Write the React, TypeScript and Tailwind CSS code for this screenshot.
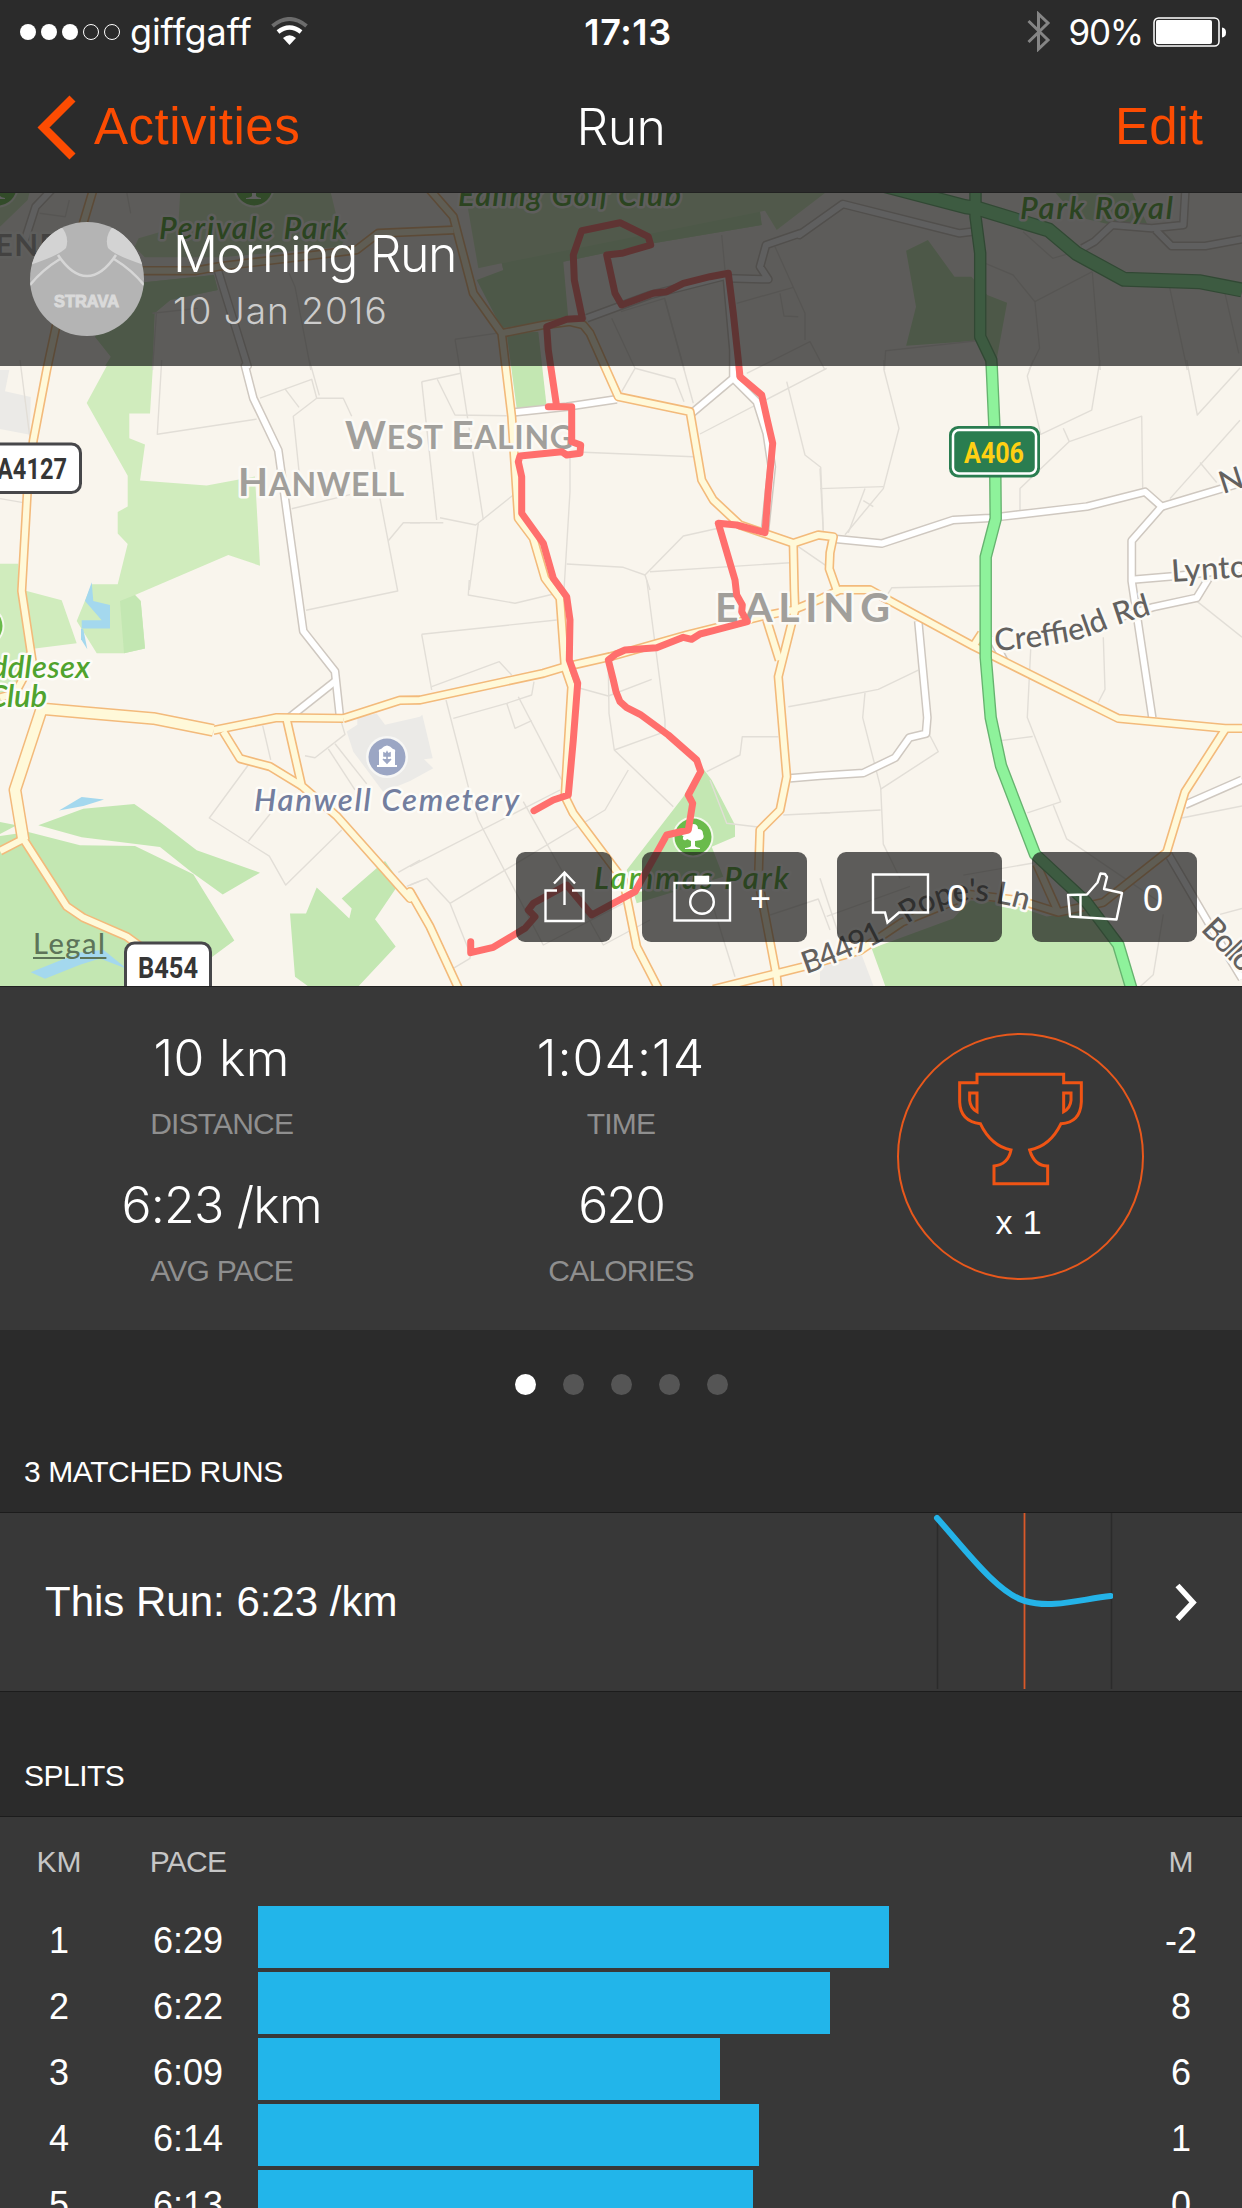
import React from "react";

/* ---------- map geometry ---------- */

type Pt = string;

// Each survey sheet has its own origin and scale; points are projected into screen space.
const sheet = (ox: number, oy: number, kx: number, ky: number) => (pts: string): Pt =>
  pts
    .trim()
    .split(/\s+/)
    .map((p) => {
      const [x, y] = p.split(",").map(Number);
      return `${(ox + x / kx).toFixed(1)},${(oy + y / ky).toFixed(1)}`;
    })
    .join(" ");

const nw = sheet(0, 0, 2.525, 3);
const ne = sheet(621, 0, 2.525, 3);
const w = sheet(0, 360, 3, 2.489);
const e = sheet(820, 360, 3, 2.489);
const c = sheet(410, 190, 3, 3);
const s = sheet(410, 580, 3, 3);
const join = (...parts: Pt[]) => parts.join(" ");

const lightParks: Pt[] = [
  nw("350,715 450,680 455,576 835,576 850,650 880,700 860,740 560,772 365,772 340,740"),
  join(nw("340,850 540,825 550,870 430,900 390,940 385,1100"), w("460,0 450,133 388,133 388,195 435,210 420,300 620,312 765,290 780,512 685,485 405,585 422,600 435,718 372,730 290,730 230,650 275,558 353,558 383,458 353,432 353,378 383,365 383,288 260,107 330,0"), nw("280,1070 240,1010")),
  w("0,507 55,507 58,575 80,575 185,598 230,705 105,718 105,770 0,850"),
  c("165,5 1250,5 1100,120 1065,62 1050,65 1055,105 700,165 460,215 280,240 275,220 205,235"),
  nw("0,576 75,576 70,600 0,680"),
];
const parks: Pt[] = [
  nw("340,850 540,825 550,870 430,900 390,940 385,1098 265,1098 280,1070 240,1010"),
  w("360,600 405,585 422,600 435,718 372,730"),
  w("115,1158 250,1117 403,1105 480,1150 590,1220 780,1276 668,1330 575,1275 480,1212 245,1188"),
  w("0,1185 85,1175 240,1208 405,1210 580,1280 703,1445 630,1490 630,1568 0,1568"),
  w("0,1150 50,1158 0,1180"),
  w("950,1313 1048,1390 1055,1365 1025,1340 1155,1247 1200,1300 1125,1392 1187,1460 1065,1568 940,1568 885,1535 870,1378 918,1378"),
  c("275,220 1050,65 1055,105 700,165 460,215 475,385 275,415 200,270 280,240"),
  c("290,430 385,425 410,650 320,655"),
  ne("720,752 775,720 842,830 885,830 925,885 975,908 945,1100 940,1060 900,1022 720,1037 745,920"),
  ne("1095,576 1290,576 1330,675 1240,675 1150,650"),
  s("875,560 905,600 975,735 975,770 905,800 940,890 680,970 650,870 820,650"),
  e("155,1465 400,1390 450,1345 560,1350 680,1385 800,1370 910,1450 950,1568 200,1568"),
];
const water: Pt[] = [
  w("275,553 280,600 330,610 330,668 245,668 245,648 305,648 255,600"),
  w("243,668 250,670 262,720 243,695"),
  w("177,1121 245,1088 312,1094 250,1110"),
  w("92,1524 240,1475 310,1468 380,1515 300,1490 240,1505 135,1540"),
];
const grounds: Pt[] = [
  w("0,25 28,25 15,78 92,92 90,186 0,172"),
  join(w("1040,925 1072,908 1072,890 1130,880 1155,908 1260,888"), s("37,404 68,535 42,538 70,565 0,603"), w("1150,1075 1060,975")),
  e("0,1510 120,1470 165,1568 0,1568"),
];

const lanes: Pt[] = [
  ...["60,0 90,195", "485,0 472,185 770,147", "780,95 935,48 950,95 1030,95 1055,140", "928,0 958,88", "855,72 897,118", "950,95 880,140 900,300", "875,370 1050,335", "1115,220 1140,345 1193,575 918,623", "1165,450 1210,405 1260,405", "788,910 812,995", "745,1008 628,1140 808,1235 857,1307 1025,1170", "745,1198 810,1130", "915,985 945,990 1035,932 1020,890", "985,968 1065,1070", "1005,955 1100,1055", "1195,1275 1260,1245", "1220,1310 1260,1297", "0,345 70,355"].map(w),
  ...["135,448 260,430", "135,448 152,550 220,990", "35,575 152,550", "35,575 80,990", "82,568 135,675 290,677", "0,998 100,998", "90,983 197,1005 310,915", "205,1000 178,1200", "520,787 850,800", "480,800 480,905 462,1200", "605,385 675,535 795,567 822,635", "675,535 635,605", "765,330 850,640", "470,1122 640,1132 705,1155 820,1038 925,1015", "705,1155 720,1200", "720,1145 1140,1118", "870,732 1250,535", "980,340 1150,292", "1095,170 1150,292 1185,370 1185,450", "1010,550 1200,455 1245,540", "1110,310 1122,378 1165,380", "1130,575 1185,795 1232,832 1240,1020", "1165,1070 1260,1135", "935,135 945,240"].map(c),
  ...["178,0 175,45 315,70 440,40", "35,163 440,120", "35,163 65,330", "65,320 268,245 305,285", "108,360 180,640 205,720 400,1095 640,970", "130,415 290,370 365,345 372,305", "290,370 315,445 365,422", "325,350 455,600", "0,860 450,630", "120,970 585,690 655,570", "340,665 580,1095 720,1020", "0,915 50,895 120,970 180,1120 180,1135 130,1165", "510,325 595,348 725,298", "595,260 597,400 613,510 790,680", "613,510 765,455 765,420 710,0", "890,575 990,525 997,470 1105,470", "900,600 950,730 1050,742", "1135,380 1260,358", "1120,705 1260,698", "1080,1005 1225,957 1260,1050", "905,965 975,1190"].map(s),
  ...["192,0 192,25 237,170 190,320 75,435", "0,320 190,315", "0,270 10,430", "85,430 135,320", "130,350 160,365", "640,0 622,40 662,185 815,125 840,0", "600,375 600,320 748,203 965,140 968,320", "730,170 748,203", "1100,0 1132,137 1260,20", "1050,345 1260,150", "1140,255 1190,305", "190,600 215,567 480,562", "632,720 622,890 722,1100 622,1127", "545,947 638,937", "850,690 855,820 835,852", "1130,600 1266,690", "0,848 175,820 295,772", "135,828 128,890 182,1065 190,1205 240,1290", "182,1068 355,975 330,935", "0,1128 182,1120", "700,1108 740,1192 1020,1350", "1085,1140 1266,1110", "1030,1380 1000,1530 960,1560", "0,1290 60,1440", "20,1385 270,1310", "430,1282 640,1252", "1200,1380 1266,1365"].map(e),
  ...["920,790 990,825 1045,905 1057,1045 1030,1110", "1045,905 1190,815", "1190,815 1210,1110", "1385,860 1430,1110", "1525,880 1560,1060", "665,1110 668,1052 900,1022", "1015,695 1090,775 1190,740", "0,935 110,895 160,1110"].map(ne),
  ...["385,940 500,925", "395,940 385,1110", "730,820 745,860 785,1110", "100,640 165,650 175,600", "320,576 330,640"].map(nw),
];

const streets: Pt[] = [
  nw("60,730 90,620 130,570"),
  join(nw("550,810 625,1098"), w("735,15 760,95 835,225 910,675 1005,775 1020,890")),
  w("1005,800 865,892"),
  c("300,668 470,650 620,628"),
  c("530,385 720,315 945,258"),
  c("845,670 970,565 970,480 950,260"),
  c("970,565 1040,635 1070,730 1085,830 1065,1020"),
  join(c("950,265 1055,268 1075,268 1050,230 1068,165 1170,130"), ne("450,705 560,612 855,700 885,695")),
  e("40,445 185,457 400,398 510,393 800,365 975,328 1025,365 1266,305"),
  e("1025,365 935,450 935,550 997,890"),
  e("935,547 1060,538 1266,520"),
  e("900,640 1000,615 1130,592 1165,545"),
  join(e("295,650 322,890 318,930 268,940 225,990 130,1028 0,1035"), s("1140,595")),
  e("1095,1107 1266,1045"),
  e("1045,1230 1200,1450 1266,1540"),
  e("515,690 555,752"),
  ne("1165,745 1195,725 1240,675 1340,685 1420,675 1425,570"),
  ne("1350,690 1390,738 1475,738 1568,718"),
];

const roads: Pt[] = [
  join(nw("235,570 165,850 118,1110"), w("100,200 82,330 65,575 97,750 45,830 0,840")),
  w("0,1222 70,1192 200,1360 250,1388 380,1435 430,1465"),
  w("640,922 830,890 1030,892"),
  join(w("1030,892 1200,847"), s("30,360 400,280 460,262 600,230 830,165 1050,110 1150,90 1235,55"), e("60,572 150,572 200,595 460,712 895,892 1215,917 1266,917")),
  w("670,925 720,992 810,1012 905,1060"),
  join(w("860,895 905,1060 1010,1135 1230,1340"), s("0,935 60,1040 150,1235")),
  nw("340,812 495,812 550,800 900,750 955,700 1145,690"),
  join(c("60,0 130,80 190,310 275,430 305,680 325,985 370,1045 405,1165"), s("450,55 465,262 485,320 465,650 490,700 640,900 680,1100 750,1235")),
  join(c("275,430 400,405 480,395 520,405 540,430 625,620 840,665 875,870 910,930 990,1005 1150,1060 1225,1035"), e("40,440 30,480 28,520 50,572")),
  join(c("1150,1060 1153,1200"), s("1155,90 1105,290 1130,590 1110,690 1050,750 1045,900 1100,1190 1105,1235")),
  s("1070,120 1108,240"),
  join(s("910,1228 1180,1160"), e("120,1470 245,1400 450,1330 600,1345 715,1375 850,1350 1040,1225 1095,1075 1215,920")),
  e("650,1255 715,1375"),
  e("460,712 485,680"),
];
const wideRoads: Pt[] = [w("70,1195 45,1070 125,868 260,878 460,892 640,922")];
const trunk: Pt[] = [
  join(ne("895,560 895,650 907,760 907,1010 935,1080"), e("515,15 525,200 527,395 497,490 497,740 512,890 543,1010 645,1230 800,1350 895,1455 940,1580")),
];
const trunkWide: Pt[] = [ne("660,555 870,620 900,625 1080,690 1150,760 1270,838 1460,845 1568,870")];

const route: Pt = join(
  s("182,1085 182,1118 250,1102 345,1045 375,1010 355,990 370,970 470,915 545,1005 675,935 770,765 835,750 848,670 835,645 872,575 860,540 775,465 690,403 650,383 630,365 618,335 610,300 595,240 618,222 645,210 740,203 820,172 845,178 870,162 910,152 1012,125 995,95 997,75 980,45 975,0"),
  c("925,1000 980,1005 1065,1028 1075,900 1088,760 1072,690 1055,615 990,560 985,510 970,370 955,250 900,260 820,280 770,305 730,310 635,345 615,310 590,195 635,190 722,165 715,140 630,98 515,122 490,195 493,270 517,385 470,388 410,410 415,480 440,650 415,650 485,650 485,755 512,765 510,790 470,795 455,785 330,798 325,815 335,860 335,970 400,1060 430,1165"),
  s("470,50 480,120 478,240 503,310 490,480 475,645 430,660 372,692")
);

function Lines({ pts, color, width }: { pts: Pt[]; color: string; width: number }) {
  return (
    <g fill="none" stroke={color} strokeWidth={width} strokeLinejoin="round" strokeLinecap="butt">
      {pts.map((p, i) => (
        <polyline key={i} points={p} />
      ))}
    </g>
  );
}

function Areas({ pts, color }: { pts: Pt[]; color: string }) {
  return (
    <g fill={color}>
      {pts.map((p, i) => (
        <polygon key={i} points={p} />
      ))}
    </g>
  );
}

function Tree({ x, y }: { x: number; y: number }) {
  return (
    <g transform={`translate(${x} ${y})`}>
      <circle r="20.5" fill="#f4f8ec" />
      <circle r="18.5" fill="#6abb4b" />
      <path
        d="M-5-9Q-4-13 0-13Q5-13 5-8Q10-8 10-3Q12 1 8 3L2 4V9Q3 10.500 7 11V12H-8V11Q-3 10.500-2 9L-2 4L-6 2Q-7 4-9 3Q-11 2-9.500-1Q-13-2-11-4Q-9-5-7-4Q-8-8-5-9Z"
        fill="#fff"
      />
    </g>
  );
}

function MapCanvas() {
  const halo = { paintOrder: "stroke" as const, strokeLinejoin: "round" as const };
  return (
    <svg className="block h-[794px] w-full" viewBox="0 192 1242 794">
      <rect x="0" y="192" width="1242" height="794" fill="#f9f5ed" />
      <Areas pts={grounds} color="#ebeae7" />
      <Areas pts={lightParks} color="#d0ecbd" />
      <Areas pts={parks} color="#c3e7b2" />
      <Areas pts={water} color="#a4d8ee" />
      <Lines pts={lanes} color="#e2ded7" width={1.4} />
      <Lines pts={streets} color="#cfc8c0" width={9} />
      <Lines pts={streets} color="#ffffff" width={6} />
      <Lines pts={wideRoads} color="#f3ba7b" width={13} />
      <Lines pts={roads} color="#f3ba7b" width={9.4} />
      <Lines pts={wideRoads} color="#fff9d9" width={10} />
      <Lines pts={roads} color="#fff9d9" width={6.2} />
      <Lines pts={trunk} color="#66b36f" width={12.5} />
      <Lines pts={trunkWide} color="#66b36f" width={15} />
      <Lines pts={trunk} color="#8ef29b" width={9.8} />
      <Lines pts={trunkWide} color="#8ef29b" width={12.5} />

      <Tree x={254} y={187} />
      <Tree x={-2} y={187} />
      <Tree x={-16} y={626} />
      <Tree x={693} y={837} />
      <g transform="translate(387 757)">
        <circle r="21" fill="#f7f7f5" />
        <circle r="18.5" fill="#9ba6c4" />
        <path d="M-8 8V-5Q-9-8-6-8Q0-15 6-8Q9-8 8-5V8H10V10H-10V8Z" fill="#fff" />
        <path d="M0 7V-1M-3-4v3h6v-3l-2 1-1-2-1 2zM-4 2l4 4 4-4" stroke="#9ba6c4" strokeWidth="1.6" fill="#9ba6c4" />
      </g>

      {/* place names */}
      <g fontFamily="Lato, 'Open Sans', sans-serif" fontWeight="700" fill="#a19f9b" stroke="#fcfaf5" strokeWidth="5" style={halo}>
        <text x="345" y="448.5" fontSize="39" textLength="228">
          W<tspan fontSize="32">EST </tspan>E<tspan fontSize="32">ALING</tspan>
        </text>
        <text x="238" y="495.5" fontSize="39" textLength="166">
          H<tspan fontSize="32">ANWELL</tspan>
        </text>
        <text x="715" y="621.5" fontSize="41" textLength="175">EALING</text>
        <text x="-5" y="256" fontSize="31" textLength="62">ENF</text>
      </g>

      {/* parks and landmarks */}
      <g fontFamily="Lato, 'Open Sans', sans-serif" fontWeight="600" fontStyle="italic" fontSize="31" fill="#50a32e" stroke="#fdfcf8" strokeWidth="5" style={halo}>
        <text x="159" y="239" textLength="188">Perivale Park</text>
        <text x="458" y="205.500" textLength="223">Ealing Golf Club</text>
        <text x="1020" y="219" textLength="153">Park Royal</text>
        <text x="594" y="889" textLength="195">Lammas Park</text>
        <text x="-9" y="678" textLength="99">ddlesex</text>
        <text x="-12" y="707" textLength="59">Club</text>
        <text x="254" y="811" textLength="265" fill="#737e9e">Hanwell Cemetery</text>
      </g>

      <polyline points={route} fill="none" stroke="#ff6f6d" strokeWidth="7" strokeLinejoin="round" strokeLinecap="round" />

      {/* street names */}
      <defs>
        <path id="creffield" d="M995 651Q1070 645 1095 634T1160 612" />
        <path id="popes" d="M907 924Q945 898 980 901T1050 919" />
        <path id="b4491" d="M806 974Q845 961 890 937" />
      </defs>
      <g fontFamily="Lato, 'Open Sans', sans-serif" fontWeight="500" fontSize="31" fill="#63615f" stroke="#fcfaf5" strokeWidth="5" style={halo}>
        <text textLength="162"><textPath href="#creffield">Creffield Rd</textPath></text>
        <text textLength="126"><textPath href="#popes">Pope's Ln</textPath></text>
        <text textLength="87"><textPath href="#b4491">B4491</textPath></text>
        <text transform="translate(1172 582) rotate(-4)" textLength="94">Lynton</text>
        <text transform="translate(1223 494) rotate(-18)">Noel</text>
        <text transform="translate(1200 930) rotate(46)" textLength="80">Bollo L</text>
      </g>

      {/* road shields */}
      <g fontFamily="Roboto, 'Liberation Sans', sans-serif" fontWeight="700" fontSize="30">
        <rect x="-20" y="444" width="100.5" height="48.5" rx="9" fill="#fff" stroke="#47474a" strokeWidth="3" />
        <text x="-3" y="478.500" textLength="70" lengthAdjust="spacingAndGlyphs" fill="#363636">A4127</text>
        <rect x="125.5" y="943" width="85" height="60" rx="9" fill="#fff" stroke="#47474a" strokeWidth="3" />
        <text x="138" y="977.500" textLength="60" lengthAdjust="spacingAndGlyphs" fill="#363636">B454</text>
        <rect x="949" y="426" width="91" height="51.5" rx="9" fill="#2a7d50" />
        <rect x="953" y="430" width="83" height="43.5" rx="6" fill="none" stroke="#fff" strokeWidth="2.5" />
        <text x="964" y="462.500" textLength="60" lengthAdjust="spacingAndGlyphs" fill="#ffd013">A406</text>
      </g>
    </svg>
  );
}

/* ---------- icons ---------- */

function Wifi() {
  return (
    <svg className="ml-[19px] h-[29px] w-[37px]" viewBox="0 0 37 29" fill="none">
      <path d="M1.500 9Q18.500-5 35.500 9" stroke="#6c6c6c" strokeWidth="4" />
      <path d="M7 15Q18.500 6 30 15" stroke="#fff" strokeWidth="4.5" />
      <path d="M18.500 28L12 21Q18.500 15.500 25 21Z" fill="#fff" />
    </svg>
  );
}

function ShareIcon() {
  return (
    <svg className="h-[90px] w-[96px]" viewBox="0 0 96 90" fill="none" stroke="#fff" strokeWidth="2.4">
      <path d="M41 38.500H29.500V69H67.500V38.500H56" />
      <path d="M48.500 53V21M38 31.500L48.500 20.500L59 31.500" />
    </svg>
  );
}

function CameraIcon() {
  return (
    <svg className="h-[90px] w-[108px]" viewBox="0 0 108 90" fill="none" stroke="#fff" strokeWidth="2.4">
      <rect x="32.5" y="31" width="55.5" height="37.5" />
      <path d="M53.500 31V25H66V31Z" fill="#fff" />
      <circle cx="60" cy="50" r="11.800" />
    </svg>
  );
}

function CommentIcon() {
  return (
    <svg className="h-[90px] w-[110px]" viewBox="0 0 110 90" fill="none" stroke="#fff" strokeWidth="2.4">
      <path d="M36 22.500H91V60.500H62L50.500 70.500L48 60.500H36Z" />
    </svg>
  );
}

function LikeIcon() {
  return (
    <svg className="h-[90px] w-[111px]" viewBox="0 0 111 90" fill="none" stroke="#fff" strokeWidth="2.4" strokeLinejoin="round">
      <path d="M36 43L38 64.500L84.500 67.500L90 41L72 37L75 25L73 22L68.500 21.500L65.500 30.500L55 42.500Z" />
      <path d="M48.500 43V65" />
    </svg>
  );
}

function Trophy() {
  return (
    <svg className="h-[114px] w-[127px]" viewBox="350 260 381 342" fill="none" stroke="#f05414" strokeWidth="9">
      <path d="M410 267H670V292H723V350Q720 412 662 415Q630 482 568 494Q582 542 622 542V595H461V542Q503 538 512 494Q452 482 420 415Q360 408 358 350V292H410Z" />
      <path d="M410 323H388V345Q390 368 410 379Z" />
      <path d="M670 323H692V345Q690 368 670 379Z" />
    </svg>
  );
}

function Avatar() {
  return (
    <svg className="ml-[30px] mt-[29px] h-[114px] w-[114px]" viewBox="0 0 114 114">
      <defs>
        <clipPath id="face"><circle cx="57" cy="57" r="57" /></clipPath>
      </defs>
      <g clipPath="url(#face)">
        <rect width="114" height="114" fill="#b4b4b4" />
        <path d="M30 3Q40 14 36 26Q30 33 0 43V0Z" fill="#d3d3d3" />
        <path d="M84 3Q74 14 78 26Q84 33 114 43V0Z" fill="#d3d3d3" />
        <path d="M28 33Q42 54 57 54T86 33M30 37Q12 48 0 63M84 37Q102 48 114 63" fill="none" stroke="#d6d6d6" strokeWidth="2.5" />
        <text x="24" y="85" fontFamily="'Liberation Sans', Arial, sans-serif" fontWeight="700" fontSize="17" textLength="65" lengthAdjust="spacingAndGlyphs" fill="#dadada" stroke="#dadada">STRAVA</text>
      </g>
    </svg>
  );
}

/* ---------- screen parts ---------- */

function StatusBar() {
  return (
    <div className="grid h-[61px] grid-cols-3 items-center font-[Inter,sans-serif] text-[35px] leading-[61px]">
      <div className="flex items-center pl-5">
        <div className="flex gap-[5px]">
          <i className="size-4 rounded-full bg-white" />
          <i className="size-4 rounded-full bg-white" />
          <i className="size-4 rounded-full bg-white" />
          <i className="size-4 rounded-full border border-white" />
          <i className="size-4 rounded-full border border-white" />
        </div>
        <span className="ml-[10px] pt-[2px] text-[36px] tracking-[-0.1px]">giffgaff</span>
        <Wifi />
      </div>
      <div className="pl-[14px] pt-[2px] text-center text-[36px] font-semibold tracking-[0.6px]">17:13</div>
      <div className="flex items-center justify-end pr-[15px]">
        <svg className="mr-[17px] h-[41px] w-[24px]" viewBox="0 0 24 41" fill="none" stroke="#858585" strokeWidth="3">
          <path d="M1.500 10L21 29L11.500 38V3L21 12L1.500 31" />
        </svg>
        <span className="pt-[2px] tracking-[-1.2px]">90%</span>
        <svg className="ml-[10px] h-[30px] w-[74px]" viewBox="0 0 74 30">
          <rect x="1" y="1" width="65" height="28" rx="4.5" fill="none" stroke="#fff" strokeWidth="1.5" />
          <rect x="3" y="3" width="56" height="24" rx="2" fill="#fff" />
          <path d="M69 10.500Q73 11 73 15.500T69 20.500Z" fill="#fff" />
        </svg>
      </div>
    </div>
  );
}

function NavBar() {
  return (
    <div className="grid h-[131px] grid-cols-3 items-center text-[51px] leading-[60px]">
      <div className="flex items-center pl-[34px] tracking-[0.5px] text-[#fc4c02]">
        <svg className="h-[66px] w-[44px]" viewBox="0 0 44 66" fill="none" stroke="#fc4c02" strokeWidth="8.5">
          <path d="M38.500 4.500L9.500 33.500L38.500 62.500" />
        </svg>
        <span className="ml-[16px]">Activities</span>
      </div>
      <div className="text-center font-[Inter,sans-serif] text-[50px] font-light tracking-[-0.6px]">Run</div>
      <div className="pr-[39px] text-right text-[#fc4c02]">Edit</div>
    </div>
  );
}

function MapAction({ icon, label, className }: { icon: React.ReactNode; label?: string; className: string }) {
  return (
    <div className={`flex h-[90px] items-center rounded-[9px] bg-[#1b1b1b]/70 text-[36px] ${className}`}>
      {icon}
      {label && <span className="pt-[3px]">{label}</span>}
    </div>
  );
}

function MapPanel() {
  return (
    <div className="relative h-[794px] overflow-hidden">
      <MapCanvas />
      <div className="absolute inset-x-0 top-0 flex h-[174px] border-t border-[#222] bg-[#1b1b1b]/70 font-[Inter,sans-serif] font-light">
        <Avatar />
        <div className="ml-[29px] pt-[33px]">
          <div className="text-[50px] leading-[56px] tracking-[-1.4px]">Morning Run</div>
          <div className="text-[37px] leading-[58px] tracking-[1px] text-[#cccccc]">10 Jan 2016</div>
        </div>
      </div>
      <div className="absolute bottom-[44px] right-[45px] flex gap-[30px]">
        <MapAction icon={<ShareIcon />} className="w-[96px]" />
        <MapAction icon={<CameraIcon />} label="+" className="w-[165px]" />
        <MapAction icon={<CommentIcon />} label="0" className="w-[165px]" />
        <MapAction icon={<LikeIcon />} label="0" className="w-[165px]" />
      </div>
      <div className="absolute bottom-[27px] left-[33px] font-[Lato,sans-serif] text-[29px] font-medium leading-[32px] tracking-[1.5px] text-[#5d7459] underline decoration-2 underline-offset-[3px]">Legal</div>
    </div>
  );
}

function Stat({ value, label, tracking }: { value: string; label: string; tracking: string }) {
  return (
    <div className="text-center">
      <div className={`font-[Inter,sans-serif] text-[50px] font-light leading-[62px] ${tracking}`}>{value}</div>
      <div className="text-[30px] leading-[70px] tracking-[-0.8px] text-[#8f8f8f]">{label}</div>
    </div>
  );
}

function Stats() {
  return (
    <div className="grid h-[344px] grid-cols-3 border-t border-[#222] bg-[#383838] px-[22px] pt-[40px]">
      <div className="flex flex-col gap-[15px]">
        <Stat value="10 km" label="DISTANCE" tracking="tracking-[0.3px]" />
        <Stat value="6:23 /km" label="AVG PACE" tracking="tracking-[-0.8px]" />
      </div>
      <div className="flex flex-col gap-[15px]">
        <Stat value="1:04:14" label="TIME" tracking="tracking-[1px]" />
        <Stat value="620" label="CALORIES" tracking="tracking-[-2px]" />
      </div>
      <div className="mx-auto mt-[6px] flex size-[247px] flex-col items-center rounded-full border-2 border-[#e8581c] pt-[37px]">
        <Trophy />
        <div className="mt-[16px] pr-[3px] text-[34px] leading-[40px] tracking-[0.4px]">x 1</div>
      </div>
    </div>
  );
}

function Pager() {
  return (
    <div className="flex h-[108px] items-center justify-center gap-[27px]">
      <i className="size-[21px] rounded-full bg-white" />
      <i className="size-[21px] rounded-full bg-[#555]" />
      <i className="size-[21px] rounded-full bg-[#555]" />
      <i className="size-[21px] rounded-full bg-[#555]" />
      <i className="size-[21px] rounded-full bg-[#555]" />
    </div>
  );
}

function MatchedRuns() {
  return (
    <>
      <div className="flex h-[74px] items-center px-6 pb-[7px] text-[30px] tracking-[-0.4px]">3 MATCHED RUNS</div>
      <div className="flex h-[180px] items-center border-y border-[#1c1c1c] bg-[#383838] pl-[45px] pr-[44px]">
        <span className="flex-1 text-[42px] leading-[48px]">This Run: 6:23 /km</span>
        <svg className="h-[178px] w-[182px]" viewBox="0 0 182 178" fill="none">
          <path d="M6.500 0V176M180.500 0V176" stroke="#2b2b2b" strokeWidth="1.5" />
          <path d="M93.500 0V176" stroke="#d9592a" strokeWidth="1.8" />
          <path d="M6 5C33 35 66 80 94 88C121 96 151 86 179.500 83" stroke="#24b3e8" strokeWidth="6" strokeLinecap="round" />
        </svg>
        <svg className="ml-[61px] h-[40px] w-[24px]" viewBox="0 0 24 40" fill="none" stroke="#fff" strokeWidth="5.5">
          <path d="M3.500 3.500L19 20.500L3.500 37" />
        </svg>
      </div>
    </>
  );
}

const splits = [
  { km: 1, pace: "6:29", bar: 631, climb: "-2" },
  { km: 2, pace: "6:22", bar: 572, climb: "8" },
  { km: 3, pace: "6:09", bar: 462, climb: "6" },
  { km: 4, pace: "6:14", bar: 501, climb: "1" },
  { km: 5, pace: "6:13", bar: 495, climb: "0" },
];

function Splits() {
  return (
    <>
      <div className="flex h-[124px] items-center px-6 pt-[42px] text-[30px] tracking-[-0.5px]">SPLITS</div>
      <div className="border-t border-[#1c1c1c] bg-[#383838] text-center">
        <div className="flex h-[89px] items-center text-[30px] text-[#c6c6c6]">
          <span className="w-[118px]">KM</span>
          <span className="w-[140px] tracking-[-0.8px]">PACE</span>
          <span className="ml-auto w-[122px]">M</span>
        </div>
        {splits.map((r) => (
          <div key={r.km} className="flex h-[66px] items-start text-[36px] leading-[69px]">
            <span className="w-[118px]">{r.km}</span>
            <span className="w-[140px]">{r.pace}</span>
            <div className="h-[62px] bg-[#22b5ea]" style={{ width: r.bar }} />
            <span className="ml-auto w-[122px]">{r.climb}</span>
          </div>
        ))}
      </div>
    </>
  );
}

export default function App() {
  return (
    <div className="h-[2208px] w-[1242px] overflow-hidden bg-[#2b2b2b] font-['Liberation_Sans',Arial,sans-serif] text-white">
      <StatusBar />
      <NavBar />
      <MapPanel />
      <Stats />
      <Pager />
      <MatchedRuns />
      <Splits />
    </div>
  );
}
